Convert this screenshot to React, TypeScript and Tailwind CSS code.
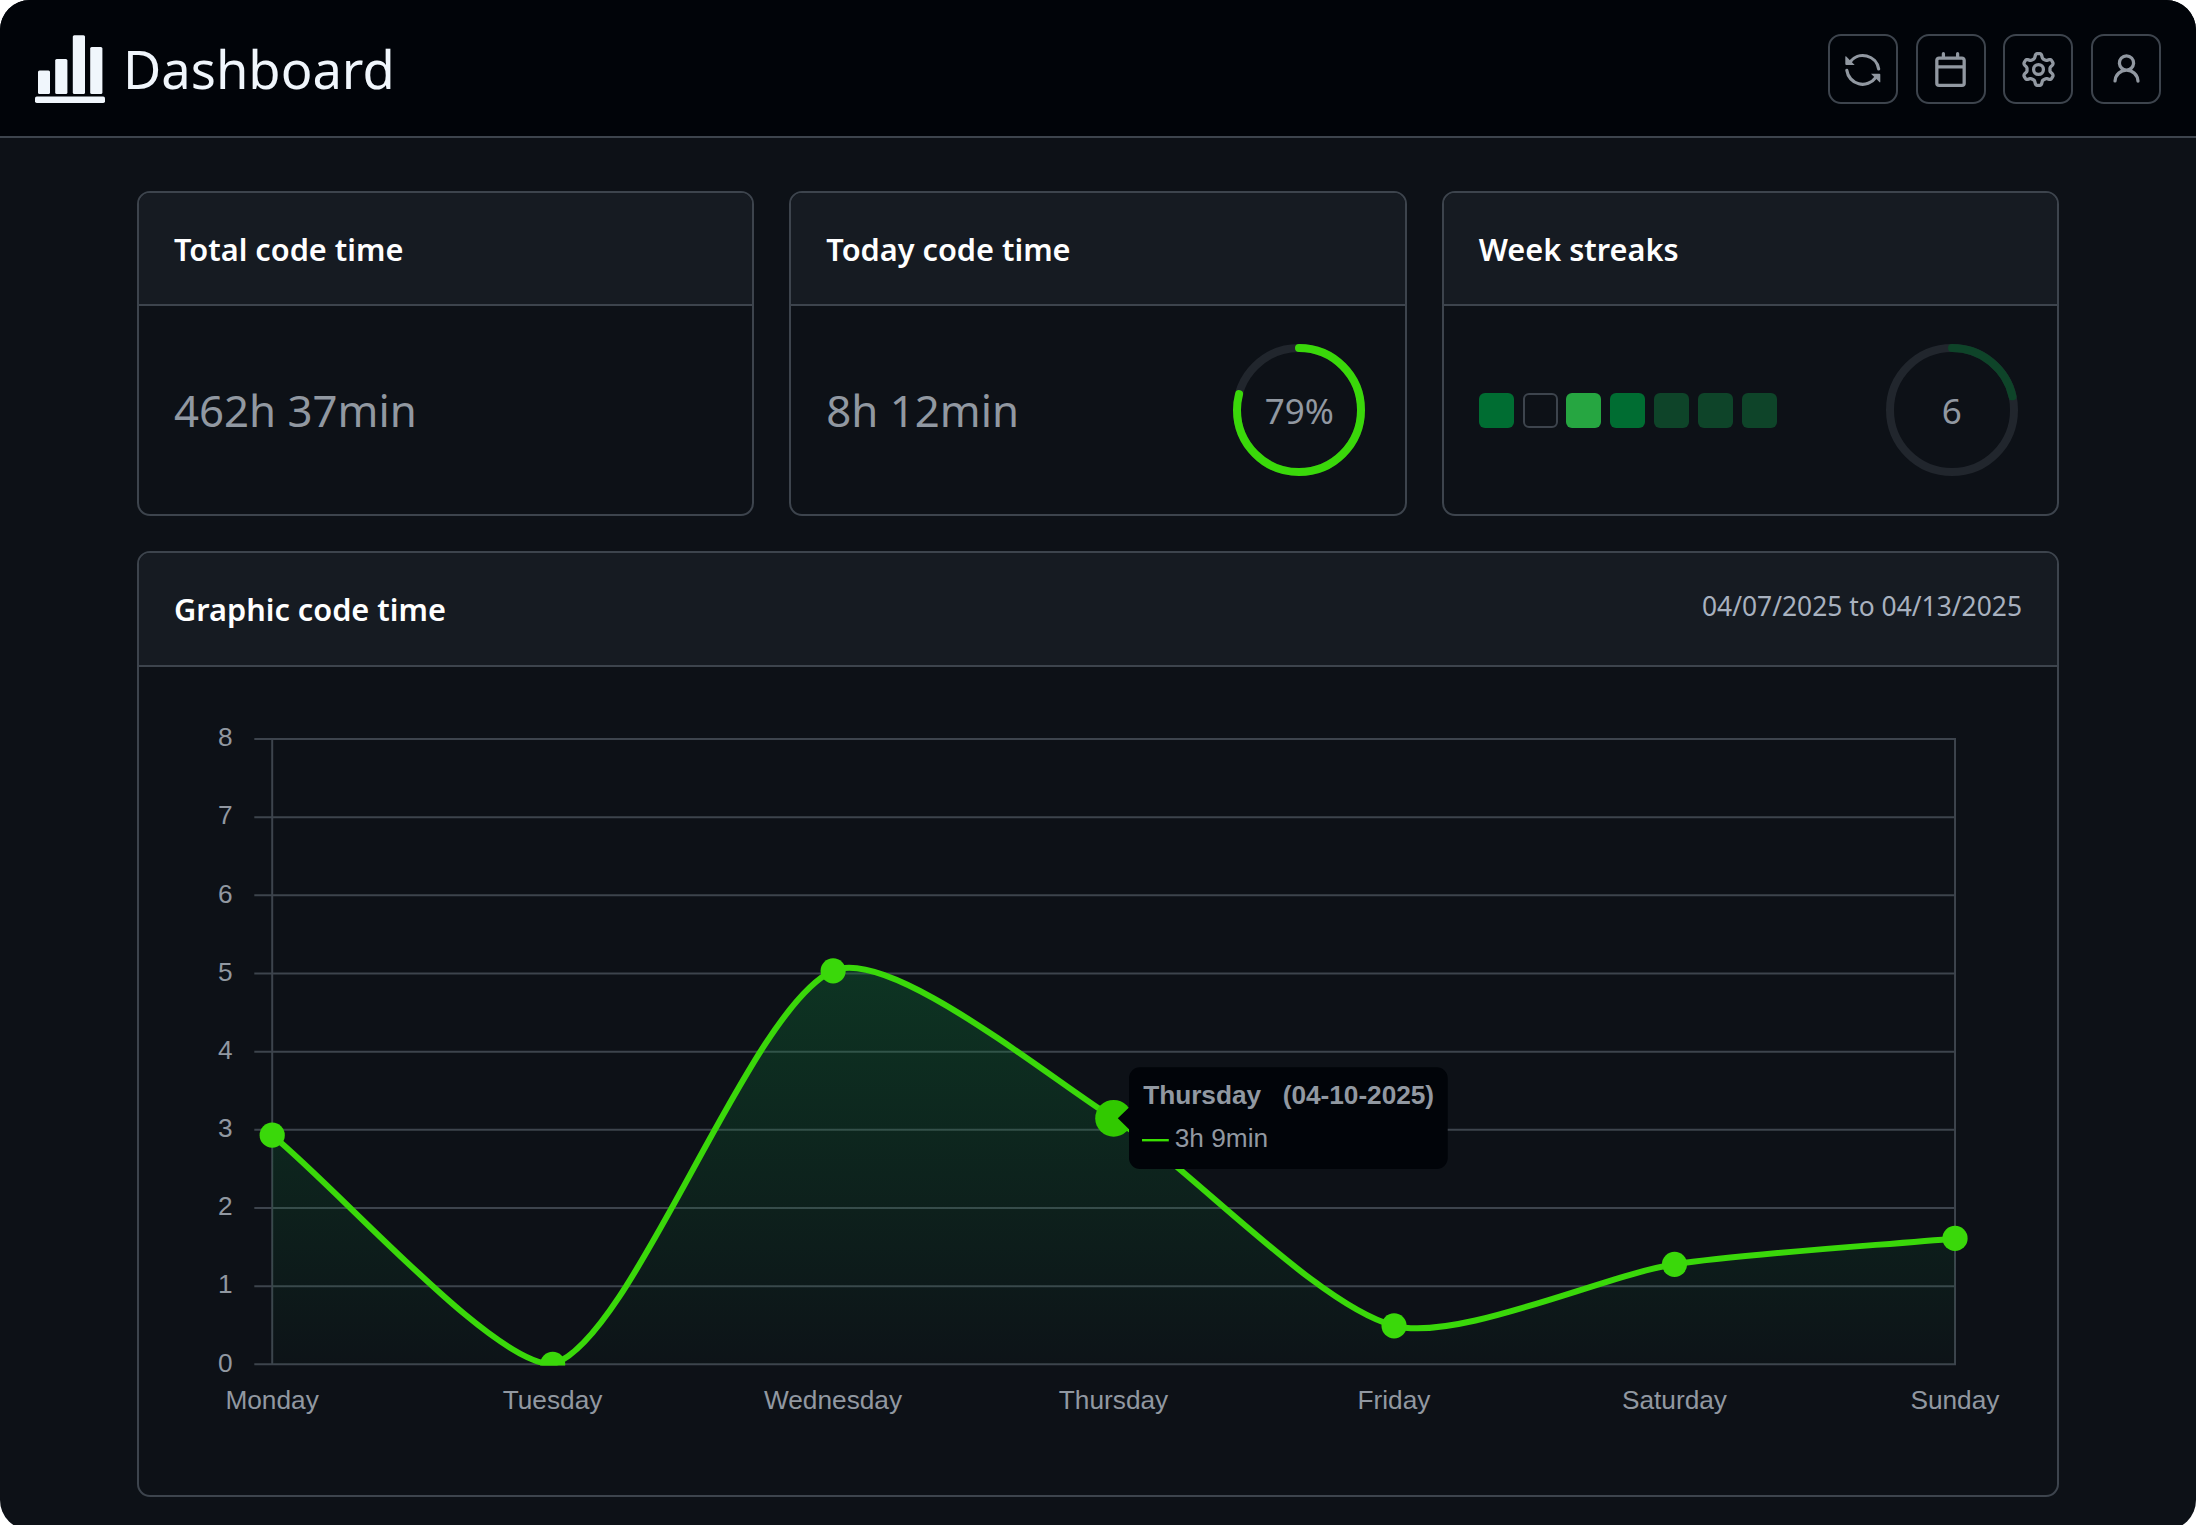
import type { ReactNode } from "react";

const LINE = "#3ad80a";

function IconButton({ label, children }: { label: string; children: ReactNode }) {
  return (
    <button
      aria-label={label}
      className="flex size-[70px] items-center justify-center rounded-[13px] border-2 border-[#3d444d] text-[#9198a1]"
    >
      {children}
    </button>
  );
}

function Icon({ d }: { d: string }) {
  return (
    <svg width="35" height="35" viewBox="0 0 16 16" fill="currentColor" className="overflow-visible" aria-hidden="true">
      <path d={d} />
    </svg>
  );
}

function SyncIcon() {
  return (
    <svg width="35" height="35" viewBox="-1 0 105 105" fill="none" className="overflow-visible" aria-hidden="true">
      <path d="M14 30 A48 48 0 0 1 100 51" stroke="currentColor" strokeWidth="9.6" strokeLinecap="round" />
      <path d="M4.5 55 A48 48 0 0 0 91 77" stroke="currentColor" strokeWidth="9.6" strokeLinecap="round" />
      <path d="M2 13 L28 39 H3 Q0 39 0 36 V14 Q0.5 12 2 13 Z" fill="currentColor" />
      <path d="M103 91 L77 65 H102 Q105 65 105 68 V90 Q104.5 92 103 91 Z" fill="currentColor" />
    </svg>
  );
}

const CALENDAR =
  "M4.75 0a.75.75 0 0 1 .75.75V2h5V.75a.75.75 0 0 1 1.5 0V2h1.25c.966 0 1.75.784 1.75 1.75v10.5A1.75 1.75 0 0 1 13.25 16H2.75A1.75 1.75 0 0 1 1 14.25V3.75C1 2.784 1.784 2 2.75 2H4V.75A.75.75 0 0 1 4.75 0ZM2.5 7.5v6.75c0 .138.112.25.25.25h10.5a.25.25 0 0 0 .25-.25V7.5Zm10.75-4H2.75a.25.25 0 0 0-.25.25V6h11V3.75a.25.25 0 0 0-.25-.25Z";
const GEAR =
  "M8 0a8.2 8.2 0 0 1 .701.031C9.444.095 9.99.645 10.16 1.29l.288 1.107c.018.066.079.158.212.224.231.114.454.243.668.386.123.082.233.09.299.071l1.103-.303c.644-.176 1.392.021 1.82.63.27.385.506.792.704 1.218.315.675.111 1.422-.364 1.891l-.814.806c-.049.048-.098.147-.088.294.016.257.016.515 0 .772-.01.147.038.246.088.294l.814.806c.475.469.679 1.216.364 1.891a7.977 7.977 0 0 1-.704 1.217c-.428.61-1.176.807-1.82.63l-1.102-.302c-.067-.019-.177-.011-.3.071a5.909 5.909 0 0 1-.668.386c-.133.066-.194.158-.211.224l-.29 1.106c-.168.646-.715 1.196-1.458 1.26a8.006 8.006 0 0 1-1.402 0c-.743-.064-1.289-.614-1.458-1.26l-.289-1.106c-.018-.066-.079-.158-.212-.224a5.738 5.738 0 0 1-.668-.386c-.123-.082-.233-.09-.299-.071l-1.103.303c-.644.176-1.392-.021-1.82-.63a8.12 8.12 0 0 1-.704-1.218c-.315-.675-.111-1.422.363-1.891l.815-.806c.05-.048.098-.147.088-.294a6.214 6.214 0 0 1 0-.772c.01-.147-.038-.246-.088-.294l-.815-.806C.635 6.045.431 5.298.746 4.623a7.92 7.92 0 0 1 .704-1.217c.428-.61 1.176-.807 1.82-.63l1.102.302c.067.019.177.011.3-.071.214-.143.437-.272.668-.386.133-.066.194-.158.211-.224l.29-1.106C6.009.645 6.556.095 7.299.03 7.53.01 7.764 0 8 0Zm-.571 1.525c-.036.003-.108.036-.137.146l-.289 1.105c-.147.561-.549.967-.998 1.189-.173.086-.34.183-.5.29-.417.278-.97.423-1.529.27l-1.103-.303c-.109-.03-.175.016-.195.045-.22.312-.412.644-.573.99-.014.031-.021.11.059.19l.815.806c.411.406.562.957.53 1.456a4.709 4.709 0 0 0 0 .582c.032.499-.119 1.05-.53 1.456l-.815.806c-.081.08-.073.159-.059.19.162.346.353.677.573.989.02.03.085.076.195.046l1.102-.303c.56-.153 1.113-.008 1.53.27.161.107.328.204.501.29.447.222.85.629.997 1.189l.289 1.105c.029.109.101.143.137.146a6.6 6.6 0 0 0 1.142 0c.036-.003.108-.036.137-.146l.289-1.105c.147-.561.549-.967.998-1.189.173-.086.34-.183.5-.29.417-.278.97-.423 1.529-.27l1.103.303c.109.029.175-.016.195-.045.22-.313.411-.644.573-.99.014-.031.021-.11-.059-.19l-.815-.806c-.411-.406-.562-.957-.53-1.456a4.709 4.709 0 0 0 0-.582c-.032-.499.119-1.05.53-1.456l.815-.806c.081-.08.073-.159.059-.19a6.464 6.464 0 0 0-.573-.989c-.02-.03-.085-.076-.195-.046l-1.102.303c-.56.153-1.113.008-1.53-.27a4.44 4.44 0 0 0-.501-.29c-.447-.222-.85-.629-.997-1.189l-.289-1.105c-.029-.11-.101-.143-.137-.146a6.6 6.6 0 0 0-1.142 0ZM11 8a3 3 0 1 1-6 0 3 3 0 0 1 6 0ZM9.5 8a1.5 1.5 0 1 0-3.001.001A1.5 1.5 0 0 0 9.5 8Z";
const PERSON =
  "M10.561 8.073a6.005 6.005 0 0 1 3.432 5.142.75.75 0 1 1-1.498.07 4.5 4.5 0 0 0-8.99 0 .75.75 0 0 1-1.498-.07 6.004 6.004 0 0 1 3.431-5.142 3.999 3.999 0 1 1 5.123 0ZM10.5 5a2.5 2.5 0 1 0-5 0 2.5 2.5 0 0 0 5 0Z";

function Logo() {
  return (
    <svg width="70" height="70" viewBox="0 -1 70 70" fill="#f0f6fc" aria-hidden="true">
      <rect x="3" y="35.5" width="12" height="23.5" rx="1.5" />
      <rect x="20.2" y="24" width="12.2" height="35" rx="1.5" />
      <rect x="37.8" y="0.3" width="12.2" height="58.7" rx="1.5" />
      <rect x="55.2" y="12" width="12.2" height="47" rx="1.5" />
      <rect x="0" y="61.5" width="70" height="6.5" rx="1.8" />
    </svg>
  );
}

function Card({ title, aside, className, children }: { title: string; aside?: string; className: string; children: ReactNode }) {
  return (
    <section className={`flex flex-col overflow-hidden rounded-[13px] border-2 border-[#3d444d] ${className}`}>
      <div className="flex flex-1 items-center justify-between bg-[#161b22] px-[35px]">
        <h2 className="pt-px text-[30.7px] leading-none font-semibold text-white">{title}</h2>
        {aside && <span className="pb-[5px] text-[26.4px] leading-none text-[#a8b1bf]">{aside}</span>}
      </div>
      {children}
    </section>
  );
}

function StatBody({ children }: { children: ReactNode }) {
  return (
    <div className="flex h-[210px] shrink-0 items-center justify-between border-t-2 border-[#3d444d] px-[35px] text-[43.75px] leading-none text-[#9198a1]">
      {children}
    </div>
  );
}

function Ring({ fraction, color, label }: { fraction: number; color: string; label: string }) {
  const r = 62;
  const length = 2 * Math.PI * r;
  return (
    <div className="mr-[4.3px] grid size-[132px] place-items-center">
      <svg className="col-start-1 row-start-1 -rotate-90" width="132" height="132" viewBox="0 0 132 132" fill="none" strokeWidth="8">
        <circle cx="66" cy="66" r={r} stroke="#21262d" />
        <circle cx="66" cy="66" r={r} stroke={color} strokeLinecap="round" strokeDasharray={`${length * fraction} ${length}`} />
      </svg>
      <span className="col-start-1 row-start-1 text-[35px] leading-none">{label}</span>
    </div>
  );
}

const points = [
  { day: "Monday", y: 1135.2 },
  { day: "Tuesday", y: 1364.3 },
  { day: "Wednesday", y: 970.8 },
  { day: "Thursday", y: 1118.3 },
  { day: "Friday", y: 1325.8 },
  { day: "Saturday", y: 1264.3 },
  { day: "Sunday", y: 1238.4 },
].map((p, i) => ({ ...p, x: 272.2 + i * 280.47 }));

const BASE = 1364.3;
const TOP = 739;

/** Smooth path through the points; control points never pass below the axis. */
function curve(tension: number) {
  const dist = (a: { x: number; y: number }, b: { x: number; y: number }) => Math.hypot(b.x - a.x, b.y - a.y);
  const handles = points.map((cur, i) => {
    const prev = points[i - 1] ?? cur;
    const next = points[i + 1] ?? cur;
    const d01 = dist(prev, cur);
    const d12 = dist(cur, next);
    const fa = (tension * d01) / (d01 + d12);
    const fb = (tension * d12) / (d01 + d12);
    const dx = next.x - prev.x;
    const dy = next.y - prev.y;
    const cap = (y: number) => Math.min(BASE, Math.max(TOP, y));
    return {
      inX: cur.x - fa * dx,
      inY: cap(cur.y - fa * dy),
      outX: cur.x + fb * dx,
      outY: cap(cur.y + fb * dy),
    };
  });
  return points
    .map((p, i) =>
      i === 0
        ? `M${p.x} ${p.y}`
        : `C${handles[i - 1].outX} ${handles[i - 1].outY} ${handles[i].inX} ${handles[i].inY} ${p.x} ${p.y}`,
    )
    .join(" ");
}

function Chart() {
  const path = curve(0.25);
  const left = points[0].x;
  const right = points[6].x;
  const ticks = [0, 1, 2, 3, 4, 5, 6, 7, 8];
  const tickY = (v: number) => BASE - (v * (BASE - TOP)) / 8;
  return (
    <svg
      width="1918"
      height="828"
      viewBox="139 667 1918 828"
      className="block font-['Liberation_Sans',Arial,sans-serif] text-[26.25px]"
    >
      <defs>
        <linearGradient id="area" gradientUnits="userSpaceOnUse" x1="0" x2="0" y1={TOP} y2={BASE}>
          <stop offset="0" stopColor="#0e823c" stopOpacity="0.48" />
          <stop offset="1" stopColor="#0e823c" stopOpacity="0.02" />
        </linearGradient>
        <clipPath id="plot">
          <rect x="200" y="700" width="1800" height={1365.5 - 700} />
        </clipPath>
      </defs>

      <g stroke="#3d444d" strokeWidth="2">
        {ticks.map((v) => (
          <line key={v} x1="254.3" x2={right + 1} y1={tickY(v)} y2={tickY(v)} />
        ))}
        <line x1={left} x2={left} y1={TOP} y2={BASE} />
        <line x1={right} x2={right} y1={TOP} y2={BASE} />
      </g>

      <g clipPath="url(#plot)">
        <path d={`${path} L${right} ${BASE} L${left} ${BASE} Z`} fill="url(#area)" />
        <path d={path} fill="none" stroke={LINE} strokeWidth="6" />
        {points.map((p) => (
          <circle
            key={p.day}
            cx={p.x}
            cy={p.y}
            r={p.day === "Thursday" ? 18.4 : 12.6}
            fill={p.day === "Thursday" ? "#31c900" : LINE}
          />
        ))}
      </g>

      <g fill="#9198a1">
        {ticks.map((v) => (
          <text key={v} x="232.6" y={tickY(v) + 7.2} textAnchor="end">
            {v}
          </text>
        ))}
        {points.map((p) => (
          <text key={p.day} x={p.x - 0.1} y="1409" textAnchor="middle">
            {p.day}
          </text>
        ))}
      </g>

      <path
        d="M1117.8 1118.3 L1129 1107.5 V1078.3 a11 11 0 0 1 11 -11 H1436.7 a11 11 0 0 1 11 11 V1158 a11 11 0 0 1 -11 11 H1140 a11 11 0 0 1 -11 -11 V1129.3 Z"
        fill="#010409"
      />
      <text x="1143.2" y="1103.6" fill="#9198a1" fontWeight="700" letterSpacing="-0.04" className="whitespace-pre">
        {"Thursday   (04-10-2025)"}
      </text>
      <line x1="1142" x2="1168.8" y1="1140.2" y2="1140.2" stroke="#39e000" strokeWidth="2.4" />
      <text x="1174.7" y="1147.3" fill="#9198a1">
        3h 9min
      </text>
    </svg>
  );
}

const streaks = ["bg-[#006d32]", "border-2 border-[#3d444d]", "bg-[#26a641]", "bg-[#006d32]", "bg-[#0e4429]", "bg-[#0e4429]", "bg-[#0e4429]"];

export default function App() {
  return (
    <div className="h-[1525px] w-[2196px] overflow-hidden bg-white font-['Noto_Sans',sans-serif]">
      <div className="flex h-[1530px] flex-col overflow-hidden rounded-[30px] bg-[#0d1117]">
        <header className="flex h-[138px] items-center justify-between border-b-2 border-[#3d444d] bg-[#010409] px-[35px] pt-[2px]">
          <div className="flex items-center gap-[18px]">
            <Logo />
            <h1 className="text-[52.5px] leading-none text-[#f0f6fc]">Dashboard</h1>
          </div>
          <nav className="flex gap-[17.7px]">
            <IconButton label="Refresh"><SyncIcon /></IconButton>
            <IconButton label="Calendar"><Icon d={CALENDAR} /></IconButton>
            <IconButton label="Settings"><Icon d={GEAR} /></IconButton>
            <IconButton label="Profile"><Icon d={PERSON} /></IconButton>
          </nav>
        </header>

        <main className="flex flex-col gap-[35px] px-[137px] pt-[53px]">
          <div className="grid grid-cols-3 gap-[35px]">
            <Card title="Total code time" className="h-[325px]">
              <StatBody>
                <span className="pt-px">462h 37min</span>
              </StatBody>
            </Card>
            <Card title="Today code time" className="h-[325px]">
              <StatBody>
                <span className="pt-px">8h 12min</span>
                <Ring fraction={0.79} color={LINE} label="79%" />
              </StatBody>
            </Card>
            <Card title="Week streaks" className="h-[325px]">
              <StatBody>
                <div className="flex gap-[8.9px]">
                  {streaks.map((tone, i) => (
                    <div key={i} className={`size-[35px] rounded-[6px] ${tone}`} />
                  ))}
                </div>
                <Ring fraction={0.214} color="#0e4429" label="6" />
              </StatBody>
            </Card>
          </div>

          <Card title="Graphic code time" aside="04/07/2025 to 04/13/2025" className="h-[946px]">
            <div className="h-[830px] shrink-0 border-t-2 border-[#3d444d]">
              <Chart />
            </div>
          </Card>
        </main>
      </div>
    </div>
  );
}
